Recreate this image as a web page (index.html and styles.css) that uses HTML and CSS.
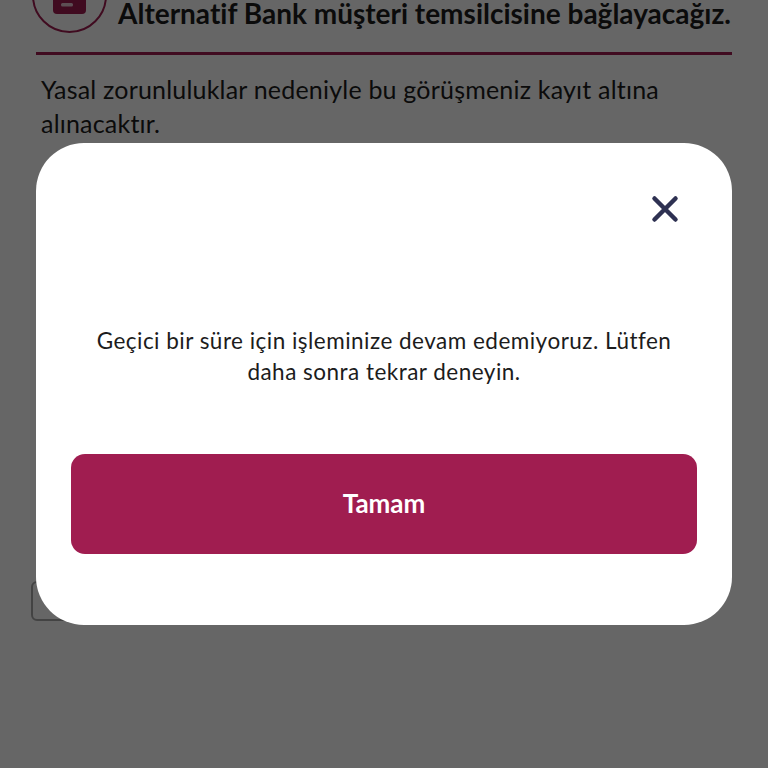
FILE: index.html
```html
<!DOCTYPE html>
<html lang="tr">
<head>
    <meta charset="UTF-8">
    <meta name="viewport" content="width=device-width, initial-scale=1.0">
    <title>Görüşme</title>
    <link rel="stylesheet" href="styles.css">
</head>
<body>
    <div id="wrap">
        <div class="head">
            <div class="head-icon">
                <svg width="33" height="40" viewBox="0 0 33 40">
                    <path d="M0 0h33v36a4 4 0 0 1-4 4H4a4 4 0 0 1-4-4z" fill="#a01d50"/>
                    <rect x="8" y="29" width="12" height="3.5" rx="1.5" fill="#e8c5d3"/>
                </svg>
            </div>
            <h1>Alternatif Bank müşteri temsilcisine bağlayacağız.</h1>
        </div>
        <p class="info">Yasal zorunluluklar nedeniyle bu görüşmeniz kayıt altına alınacaktır.</p>
        <div class="check-row"><span class="check"></span></div>
    </div>
    <div class="overlay">
        <div class="modal">
            <div class="modal-top">
                <button class="close" aria-label="Kapat">
                    <svg width="28" height="28" viewBox="0 0 28 28">
                        <path d="M3.5 3.5l21 21M24.5 3.5l-21 21" stroke="#2e3152" stroke-width="4.5" stroke-linecap="round" fill="none"/>
                    </svg>
                </button>
            </div>
            <p class="msg">Geçici bir süre için işleminize devam edemiyoruz. Lütfen daha sonra tekrar deneyin.</p>
            <button class="ok">Tamam</button>
        </div>
    </div>
</body>
</html>
```

FILE: styles.css
```css
body{
    margin: 0;
    padding: 0;
    font-family: "Lato", "Noto Sans", sans-serif;
    font-variant-ligatures: none;
}
#wrap{
    height: 768px;
    overflow: hidden;
    background: #fff;
    color: #1c1c1c;
}
.head{
    display: flex;
    align-items: flex-end;
    gap: 11px;
    height: 52px;
    margin: 0 36px;
    border-bottom: 3px solid #a01d50;
    box-sizing: content-box;
}
.head-icon{
    flex: none;
    display: flex;
    justify-content: center;
    align-items: flex-end;
    width: 75px;
    height: 75px;
    margin: -42px 0 19px -4px;
    border: 2px solid #a01d50;
    border-radius: 50%;
    box-sizing: border-box;
    padding-bottom: 17px;
}
.head h1{
    margin: 0 0 26px;
    font-size: 28px;
    font-weight: 700;
    line-height: 26px;
    white-space: nowrap;
}
.info{
    width: 640px;
    margin: 17px 0 0 41px;
    font-size: 25px;
    line-height: 34px;
    letter-spacing: 0.2px;
}
.check-row{
    margin: 441px 0 0 31px;
}
.check{
    display: block;
    width: 40px;
    height: 40px;
    border: 2px solid #a9a9a9;
    border-radius: 6px;
    box-sizing: border-box;
}
.overlay{
    position: absolute;
    top: 0;
    left: 0;
    display: flex;
    align-items: center;
    width: 100%;
    height: 768px;
    padding: 0 36px;
    box-sizing: border-box;
    background: rgba(0,0,0,.6);
}
.modal{
    width: 100%;
    padding: 0 35px 71px;
    box-sizing: border-box;
    background: #fff;
    border-radius: 48px;
}
.modal-top{
    display: flex;
    justify-content: flex-end;
    height: 182px;
    padding: 52px 18px 0 0;
    box-sizing: border-box;
}
.close{
    width: 28px;
    height: 28px;
    padding: 0;
    border: none;
    background: none;
}
.msg{
    height: 129px;
    margin: 0;
    padding: 0 20px;
    color: #1c1c1c;
    font-size: 22.5px;
    line-height: 31px;
    letter-spacing: 0.48px;
    text-align: center;
}
.ok{
    display: block;
    width: 100%;
    height: 100px;
    padding-bottom: 4px;
    border: none;
    border-radius: 14px;
    background: #a01d50;
    color: #fff;
    font-family: inherit;
    font-size: 26px;
    font-weight: 700;
}
```
